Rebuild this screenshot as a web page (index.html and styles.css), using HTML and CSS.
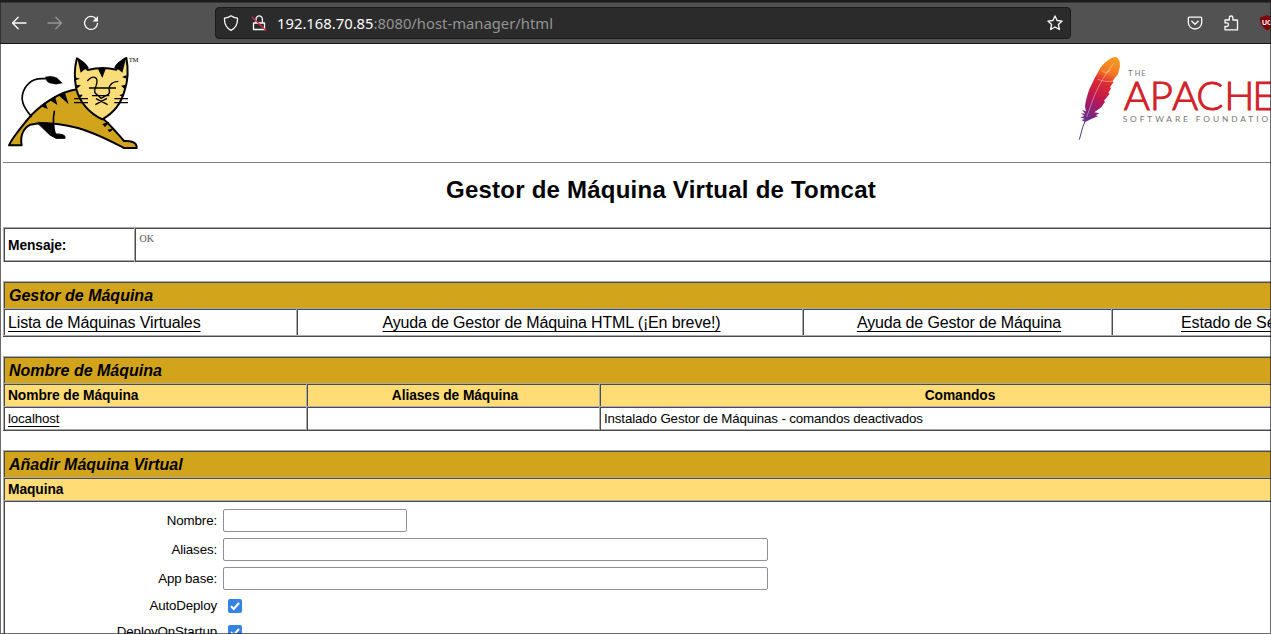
FILE: index.html
```html
<!DOCTYPE html>
<html lang="es">
<head>
<meta charset="utf-8">
<title>Gestor de Máquina Virtual de Tomcat</title>
<link rel="stylesheet" href="styles.css">
</head>
<body>
<div class="window">
  <div class="toolbar">
    <div class="nav">
      <svg class="ico" viewBox="0 0 16 16"><path d="M15 8H1.500M7.200 2.300L1.500 8l5.700 5.700"/></svg>
      <svg class="ico disabled" viewBox="0 0 16 16"><path d="M1 8h13.500M8.800 2.300L14.500 8l-5.700 5.700"/></svg>
      <svg class="ico" viewBox="0 0 16 16"><path d="M13.200 4A6.500 6.500 0 1 0 14.500 8.500"/><path class="solid" d="M15 1v5.500H9.500z"/></svg>
    </div>
    <div class="url">
      <svg class="ico" viewBox="0 0 16 16"><path d="M8 .8C6 2.400 4 3 1.500 3.200C1.200 9 3.500 13 8 15.300C12.500 13 14.800 9 14.500 3.200C12 3 10 2.400 8 .8z"/></svg>
      <svg class="ico lock" viewBox="0 0 16 16"><path d="M2.500 8h11v6.500h-11zM5 7.800V4.300a3.200 3.500 0 0 1 6.400 0v3.500"/><path class="slash" d="M1.200 2.200L14.800 15.500"/></svg>
      <div class="address"><span class="host">192.168.70.85</span>:8080/host-manager/html</div>
      <svg class="ico star" viewBox="0 0 16 16"><path d="M8 .9l2.100 4.600 5 .6-3.700 3.400 1 5L8 12l-4.400 2.500 1-5L.9 6.100l5-.6z"/></svg>
    </div>
    <div class="tools">
      <svg class="ico" viewBox="0 0 16 16"><path d="M2.300 2.200h11.400q1 0 1 1v4.300a6.700 6.500 0 0 1-13.400 0V3.200q0-1 1-1zM4.800 6.300L8 9.300l3.200-3"/></svg>
      <svg class="ico" viewBox="0 0 16 16"><path d="M2 5h4.300V2.800a1.800 1.800 0 0 1 3.600 0V5h3.800q.8 0 .8.800v9H2v-3.300h1.700a1.800 1.800 0 0 0 0-3.600H2z"/></svg>
      <svg class="ublock" viewBox="0 0 16 16"><path fill="#800000" d="M8 0Q5 2 1 2.200Q.5 11.500 8 15.500Q15.500 11.500 15 2.200Q11 2 8 0z"/><text x="3" y="10">UO</text></svg>
    </div>
  </div>

  <div class="logos">
    <svg class="tomcat" viewBox="0 -3 450 354">
      <g stroke="#000" stroke-linejoin="round" stroke-linecap="round">
        <path fill="#000" stroke-width="3" d="M112 233L160 236Q160 250 166 267Q188 266 195 274L195 280H168L150 270Z"/>
        <path fill="#d2a41c" stroke-width="6" d="M232 133C180 139 117 182 84 222C58 254 36 279 27 301H65C60 276 68 250 91 239C130 231 175 235 224 247C280 260 330 288 372 309H410Q411 296 398 291Q388 287 372 288C350 263 336 245 310 222L280 180Z"/>
        <path fill="none" stroke-width="5" d="M94 214C69 186 57 160 75 129C91 104 110 99 137 101M163 199C158 224 159 242 165 268"/>
        <path fill="#000" d="M137 96Q154 90 170 98L187 114Q169 121 149 114Q138 111 137 96Z"/>
        <path fill="#000" stroke="none" d="M112 230Q140 231 160 236L162 245L125 240ZM174 149L194 140L206 178ZM148 164L165 153L172 180ZM120 183L136 172L143 192ZM307 237L329 230L315 247ZM322 254L344 249L329 262Z"/>
        <path fill="#f9dd78" stroke-width="6" d="M231 40Q244 45 263 75Q307 64 349 74Q360 47 379 39Q389 91 374 136C363 180 334 208 307 223C267 204 238 170 229 132Q219 82 231 40Z"/>
        <path fill="#000" stroke="none" d="M232 40Q255 48 267 70Q251 73 242 83ZM378 40Q350 48 342 70Q358 73 367 83ZM294 72L317 72L307 99ZM225 97L240 101L227 106ZM380 90L366 96L380 101ZM224 119L243 121L229 132ZM378 119L363 122L374 132ZM234 149L248 149L242 158ZM372 145L358 151L368 156Z"/>
        <path fill="none" stroke-width="4" stroke-linecap="butt" d="M262 108Q276 92 286 98Q295 103 288 123Q279 143 290 148L303 160L325 148Q331 143 327 132Q329 110 355 109M267 129H348M276 152H328M286 179L321 160M288 161L323 179M222 161H264M222 173H264M343 161H384M343 173H384"/>
      </g>
      <text class="tm" x="386" y="50" textLength="29">TM</text>
    </svg>
    <svg class="asf" viewBox="0 -3 633 354">
      <defs><linearGradient id="feather" x1="155" y1="35" x2="75" y2="230" gradientUnits="userSpaceOnUse">
        <stop offset="0" stop-color="#f69923"/><stop offset=".22" stop-color="#f27b22"/><stop offset=".38" stop-color="#dd2b30"/><stop offset=".62" stop-color="#be1750"/><stop offset=".82" stop-color="#8d2077"/><stop offset="1" stop-color="#66308d"/>
      </linearGradient></defs>
      <path fill="url(#feather)" d="M166 36Q181 38 180 64L174 88L162 102L157 109L161 111L150 126L153 130L145 144L149 146L132 167L135 170L124 187L103 202L118 205L107 211L115 213L94 222L75 231L65 225L74 222L62 217L73 213L63 205L76 206L66 195L78 199L75 185Q77 164 88 133Q104 98 122 67Q147 37 166 36Z"/>
      <path fill="none" stroke="#fff" stroke-width="2" d="M162 54Q124 101 102 155L80 216M113 103Q135 112 157 109M125 77Q135 88 151 76" opacity=".6"/>
      <path fill="none" stroke="#56388d" stroke-width="3" d="M80 216Q67 244 58 284"/>
      <text class="the" x="205 224 244" y="93">THE</text>
      <text class="apache" x="191 269 336 409 493 577" y="195">APACHE</text>
      <text class="sf" x="188" y="231" textLength="464">SOFTWARE FOUNDATION</text>
    </svg>
  </div>

  <div class="page">
    <h1>Gestor de Máquina Virtual de Tomcat</h1>

    <div class="table">
      <div class="row message"><div class="cell head"><b>Mensaje:</b></div><div class="cell status">OK</div></div>
    </div>

    <div class="table">
      <div class="row"><div class="cell title">Gestor de Máquina</div></div>
      <div class="row links">
        <div class="cell first"><a>Lista de Máquinas Virtuales</a></div>
        <div class="cell"><a>Ayuda de Gestor de Máquina HTML (¡En breve!)</a></div>
        <div class="cell"><a>Ayuda de Gestor de Máquina</a></div>
        <div class="cell"><a>Estado de Servidor</a></div>
      </div>
    </div>

    <div class="table">
      <div class="row"><div class="cell title">Nombre de Máquina</div></div>
      <div class="row hosts header"><div class="cell first">Nombre de Máquina</div><div class="cell">Aliases de Máquina</div><div class="cell">Comandos</div></div>
      <div class="row hosts"><div class="cell"><a>localhost</a></div><div class="cell"></div><div class="cell">Instalado Gestor de Máquinas - comandos deactivados</div></div>
    </div>

    <div class="table">
      <div class="row"><div class="cell title">Añadir Máquina Virtual</div></div>
      <div class="row header"><div class="cell first">Maquina</div></div>
      <div class="row"><div class="cell form">
        <label for="name">Nombre:</label><input class="field short" id="name" type="text">
        <label for="aliases">Aliases:</label><input class="field" id="aliases" type="text">
        <label for="base">App base:</label><input class="field" id="base" type="text">
        <span class="opt">AutoDeploy</span><svg class="check" viewBox="0 0 14 14"><rect width="14" height="14" rx="2"/><path d="M3 7.300l2.700 2.700L11 4"/></svg>
        <span class="opt">DeployOnStartup</span><svg class="check" viewBox="0 0 14 14"><rect width="14" height="14" rx="2"/><path d="M3 7.300l2.700 2.700L11 4"/></svg>
      </div></div>
    </div>
  </div>
  <div class="frame"></div>
</div>
</body>
</html>
```

FILE: styles.css
```css
* { box-sizing: border-box; }
body { margin: 0; background: #fff; overflow: hidden; }
.window { position: relative; width: 1271px; height: 634px; overflow: hidden; display: flex; flex-direction: column; font: 13.33px "Liberation Sans", sans-serif; letter-spacing: -.14px; color: #000; }
.frame { position: absolute; inset: 0; border: 1px solid rgba(30,30,33,.66); border-top: 0; pointer-events: none; }

.toolbar { flex: none; height: 44px; display: flex; align-items: center; padding: 2px 0; background: #525252; border-top: 2px solid #1c1c1c; border-bottom: 1px solid #171717; box-shadow: inset 0 1px #363636; letter-spacing: 0; }
.nav { width: 215px; display: flex; gap: 20px; padding-left: 11px; }
.ico { width: 16px; height: 16px; flex: none; fill: none; stroke: #fbfbfe; stroke-width: 1.300; stroke-linejoin: round; stroke-linecap: round; }
.ico .solid { fill: #fbfbfe; stroke: none; }
.ico .slash { stroke: #e22850; }
.disabled { opacity: .4; }
.url { width: 856px; height: 32px; display: flex; align-items: center; padding: 0 7px; background: #2b2b2b; border: 1px solid #1b1b1b; border-radius: 4px; }
.lock { margin-left: 12px; }
.address { flex: 1; margin-left: 10px; font: 14.8px "Noto Sans", sans-serif; color: #939395; white-space: nowrap; }
.host { color: #fbfbfe; }
.tools { flex: 1; display: flex; gap: 20px; padding-left: 116px; overflow: hidden; }
.ublock { width: 16px; height: 16px; flex: none; }
.ublock text { font: bold 7px "Liberation Sans", sans-serif; fill: #fff; }

.logos { flex: none; height: 119px; display: flex; justify-content: space-between; align-items: flex-start; margin-left: 3px; border-bottom: 1px solid #808080; letter-spacing: 0; }
.tomcat { width: 150px; height: 118px; margin-left: -3px; }
.asf { width: 211px; height: 118px; }
.tm { font: 20px "Liberation Serif", serif; }
.the { font: 22px Lato, sans-serif; fill: #777; }
.apache { font: 300 120px Lato, sans-serif; fill: #d22128; stroke: #d22128; stroke-width: 3; }
.sf { font: 25px Lato, sans-serif; fill: #777; }

.page { padding-left: 3px; }
h1 { margin: 0; height: 64px; font-size: 24px; line-height: 54px; letter-spacing: .23px; text-align: center; width: 1316px; white-space: nowrap; }
.table { width: 1313px; margin-bottom: 19px; border-bottom: 1px solid #4b4b4e; }
.row { display: grid; grid-template-columns: 1fr; height: 23px; line-height: 22px; }
.row:last-child { border-bottom: 1px solid #ababad; height: 24px; }
.cell { border: solid #ababad; border-width: 1px 0 0 1px; box-shadow: inset 1px 1px #4b4b4e; padding: 1px 0 0 4px; white-space: nowrap; }
.row:has(.title) { height: 27px; }
.title { background: #d2a41c; font: italic bold 16px/25px "Liberation Sans", sans-serif; letter-spacing: 0; padding-left: 5px; }
.message { grid-template-columns: 131px 1fr; }
.row.message { height: 34px; line-height: 33px; }
.head, .header { font-size: 13.8px; letter-spacing: -.09px; }
.status { font: 10px/12px "Liberation Serif", serif; letter-spacing: 0; color: #555; padding: 5px 0 0 4.5px; }
.links { grid-template-columns: 293px 506px 309px 1fr; font-size: 16px; text-align: center; }
.row.links { height: 28px; line-height: 25px; }
.links .cell:last-child { padding-left: 69px; text-align: left; }
.first, .links .first { text-align: left; }
a { text-decoration: underline; text-decoration-thickness: 1px; text-underline-offset: 3px; }
.hosts { grid-template-columns: 303px 293px 1fr; }
.header { font-weight: bold; text-align: center; }
.header .cell { background: #ffdc75; }
.row:has(.form) { height: 160px; }
.form { display: grid; grid-template-columns: 209px auto; grid-template-rows: 29px 29px 29px 26px 26px; column-gap: 6px; align-content: start; align-items: center; justify-items: start; padding: 5px 0 0 4px; line-height: 16px; }
.form label, .opt { justify-self: end; }
.field { width: 545px; height: 23px; border: 1px solid #8f8f9d; border-radius: 2px; background: #fff; }
.short { width: 184px; }
.check { width: 14px; height: 14px; margin-left: 5px; }
.check rect { fill: #3584e4; }
.check path { fill: none; stroke: #fff; stroke-width: 2; }
```
